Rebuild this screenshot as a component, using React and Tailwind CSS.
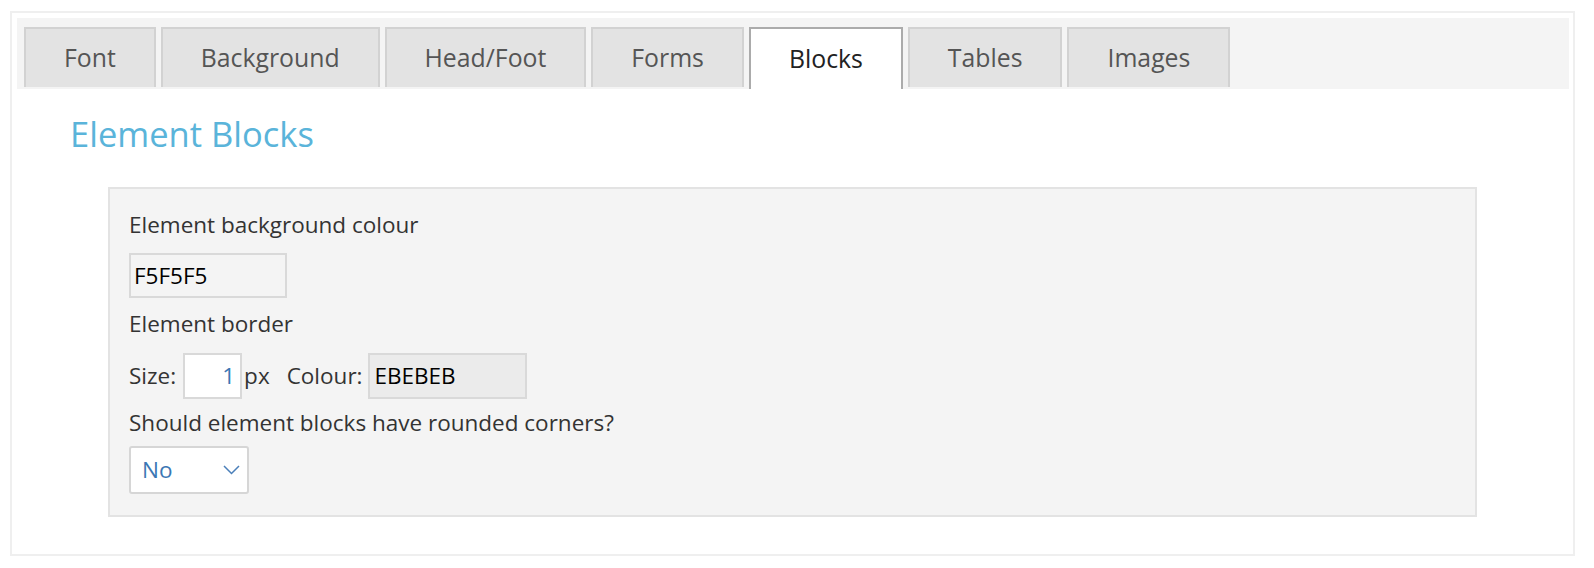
import React from "react";

const tabs = ["Font", "Background", "Head/Foot", "Forms", "Blocks", "Tables", "Images"];

function Tab({ label, active }) {
  if (active) {
    return (
      <div className="h-[62px] px-[38px] flex items-center border-x-2 border-t-2 border-[#ababab] bg-white text-[#222] text-[24.8px]">
        {label}
      </div>
    );
  }
  return (
    <div className="h-[60px] px-[38px] flex items-center border-x-2 border-t-2 border-[#d2d2d2] bg-[#e3e3e3] text-[#555] text-[24.8px]">
      {label}
    </div>
  );
}

function Chevron() {
  return (
    <svg width="17" height="10" viewBox="0 0 17 10" fill="none">
      <polyline points="1,1 8.5,8.5 16,1" stroke="#4a7fb9" strokeWidth="1.5" />
    </svg>
  );
}

export default function App() {
  return (
    <div className="w-[1594px] h-[568px] bg-white pt-[11px] pl-[10px] font-['Open_Sans',sans-serif]">
      <div className="w-[1565px] h-[545px] border-2 border-[#efefef]">
        <div className="pt-[5px] pl-[5px] pr-[4px]">
          <div className="h-[71px] bg-[#f4f4f4] pt-[9px] pl-[7px] flex items-start gap-[5px]">
            {tabs.map((t) => (
              <Tab key={t} label={t} active={t === "Blocks"} />
            ))}
          </div>
        </div>

        <h1 className="ml-[58px] mt-[24px] text-[34.5px] leading-[41px] font-normal text-[#5ab4da]">
          Element Blocks
        </h1>

        <div className="mx-[96px] mt-[33px] border-2 border-[#e3e3e3] bg-[#f4f4f4] pt-[21px] pb-[21px] pl-[19px] text-[22.5px] leading-[30px] text-[#333]">
          <div>Element background colour</div>
          <div className="mt-[13px] w-[158px] h-[45px] border-2 border-[#d9d9d9] bg-[#f4f4f4] pl-[3px] flex items-center text-black">
            F5F5F5
          </div>

          <div className="mt-[11px]">Element border</div>
          <div className="mt-[14px] flex items-center">
            <span>Size:</span>
            <div className="ml-[7px] w-[59px] h-[46px] border-2 border-[#d9d9d9] bg-white pr-[5px] flex items-center justify-end text-[#3b77b4]">
              1
            </div>
            <span className="ml-[2px]">px</span>
            <span className="ml-[17px]">Colour:</span>
            <div className="ml-[6px] w-[159px] h-[46px] border-2 border-[#d9d9d9] bg-[#ebebeb] pl-[4px] flex items-center text-black">
              EBEBEB
            </div>
          </div>

          <div className="mt-[9px]">Should element blocks have rounded corners?</div>
          <div className="mt-[8px] w-[120px] h-[48px] border-2 border-[#d6d6d6] rounded-[3px] bg-white pl-[11px] pr-[7px] flex items-center justify-between text-[#3b77b4]">
            <span>No</span>
            <Chevron />
          </div>
        </div>
      </div>
    </div>
  );
}
